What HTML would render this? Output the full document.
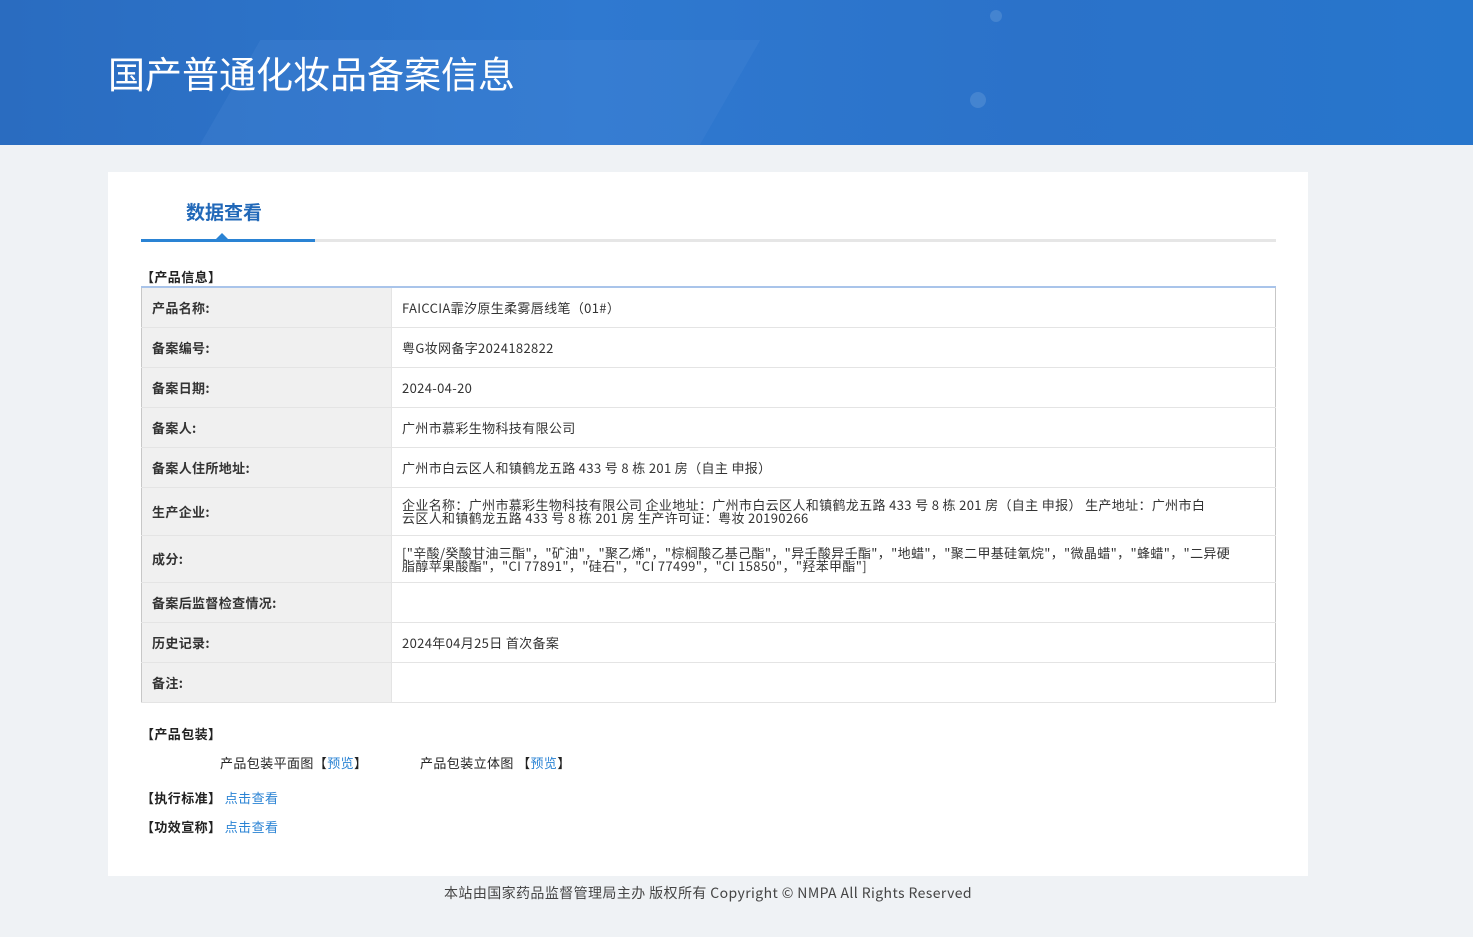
<!DOCTYPE html><html><head><meta charset="utf-8"><style>
*{margin:0;padding:0;box-sizing:border-box}
body{width:1473px;height:937px;background:#eff2f5;font-family:"Liberation Sans","Noto Sans CJK SC",sans-serif;color:#333;position:relative;overflow:hidden}
.hd{position:absolute;left:0;top:0;width:1473px;height:145px;background:linear-gradient(90deg,#2a6cc0 0%,#2f79d0 40%,#2b72c9 70%,#2776cc 100%);overflow:hidden}
.hd h1{position:absolute;left:108px;top:48px;font-size:37px;font-weight:normal;color:#fff;font-family:"Noto Sans CJK SC",sans-serif;line-height:48px}
.card{position:absolute;left:108px;top:172px;width:1200px;height:704px;background:#fff}
.tab{position:absolute;left:186px;top:198px;font-size:19px;font-weight:bold;color:#2168b8;font-family:"Noto Sans CJK SC",sans-serif}
.line{position:absolute;left:141px;top:239px;width:1135px;height:3px;background:#e6e6e6}
.line2{position:absolute;left:141px;top:239px;width:174px;height:3px;background:#2a83d4}
.tri{position:absolute;left:216px;top:233px;width:0;height:0;border-left:6px solid transparent;border-right:6px solid transparent;border-bottom:6px solid #2a83d4}
.sec{position:absolute;font-size:13px;font-weight:bold;color:#222;font-family:"Noto Sans CJK SC",sans-serif;letter-spacing:.4px}
table{position:absolute;left:141px;top:286px;width:1135px;border-collapse:collapse;border:1px solid #c7c7c7;border-top:2px solid #a9c4ea;font-size:13px;font-family:"Noto Sans CJK SC",sans-serif;letter-spacing:.35px}
td{border-bottom:1px solid #e4e4e4;padding:0 10px;color:#333}
td.l{width:250px;background:#f0f0f0;font-weight:bold;border-right:1px solid #e4e4e4}
td.r{line-height:13px}
a{color:#2a83d4;text-decoration:none}
.ft{position:absolute;top:883px;left:0;width:1416px;text-align:center;font-size:14px;color:#444;font-family:"Noto Sans CJK SC",sans-serif;letter-spacing:.4px}
.sm{position:absolute;font-size:13px;font-family:"Noto Sans CJK SC",sans-serif;color:#222;letter-spacing:.4px}
</style></head><body>
<div class="hd">
<div style="position:absolute;left:230px;top:40px;width:500px;height:105px;background:rgba(80,140,220,.22);transform:skewX(-30deg)"></div>
<div style="position:absolute;left:990px;top:10px;width:12px;height:12px;border-radius:50%;background:rgba(255,255,255,.12)"></div>
<div style="position:absolute;left:970px;top:92px;width:16px;height:16px;border-radius:50%;background:rgba(255,255,255,.12)"></div>
<h1>国产普通化妆品备案信息</h1></div>
<div class="card"></div>
<div class="tab">数据查看</div>
<div class="line"></div><div class="line2"></div><div class="tri"></div>
<div class="sec" style="left:141px;top:267px">【产品信息】</div>
<table>
<tr style="height:40px"><td class="l">产品名称:</td><td>FAICCIA霏汐原生柔雾唇线笔（01#）</td></tr>
<tr style="height:40px"><td class="l">备案编号:</td><td>粤G妆网备字2024182822</td></tr>
<tr style="height:40px"><td class="l">备案日期:</td><td>2024-04-20</td></tr>
<tr style="height:40px"><td class="l">备案人:</td><td>广州市慕彩生物科技有限公司</td></tr>
<tr style="height:40px"><td class="l">备案人住所地址:</td><td>广州市白云区人和镇鹤龙五路 433 号 8 栋 201 房（自主 申报）</td></tr>
<tr style="height:48px"><td class="l">生产企业:</td><td class="r">企业名称：广州市慕彩生物科技有限公司 企业地址：广州市白云区人和镇鹤龙五路 433 号 8 栋 201 房（自主 申报） 生产地址：广州市白<br>云区人和镇鹤龙五路 433 号 8 栋 201 房 生产许可证：粤妆 20190266</td></tr>
<tr style="height:47px"><td class="l">成分:</td><td class="r">["辛酸/癸酸甘油三酯"，"矿油"，"聚乙烯"，"棕榈酸乙基己酯"，"异壬酸异壬酯"，"地蜡"，"聚二甲基硅氧烷"，"微晶蜡"，"蜂蜡"，"二异硬<br>脂醇苹果酸酯"，"CI 77891"，"硅石"，"CI 77499"，"CI 15850"，"羟苯甲酯"]</td></tr>
<tr style="height:40px"><td class="l">备案后监督检查情况:</td><td></td></tr>
<tr style="height:40px"><td class="l">历史记录:</td><td>2024年04月25日 首次备案</td></tr>
<tr style="height:40px"><td class="l">备注:</td><td></td></tr>
</table>
<div class="sec" style="left:141px;top:724px">【产品包装】</div>
<div class="sm" style="left:220px;top:753px">产品包装平面图【<a>预览</a>】</div>
<div class="sm" style="left:420px;top:753px">产品包装立体图 【<a>预览</a>】</div>
<div class="sec" style="left:141px;top:788px">【执行标准】 <a style="font-weight:normal">点击查看</a></div>
<div class="sec" style="left:141px;top:817px">【功效宣称】 <a style="font-weight:normal">点击查看</a></div>
<div class="ft">本站由国家药品监督管理局主办 版权所有 Copyright © NMPA All Rights Reserved</div>
</body></html>
